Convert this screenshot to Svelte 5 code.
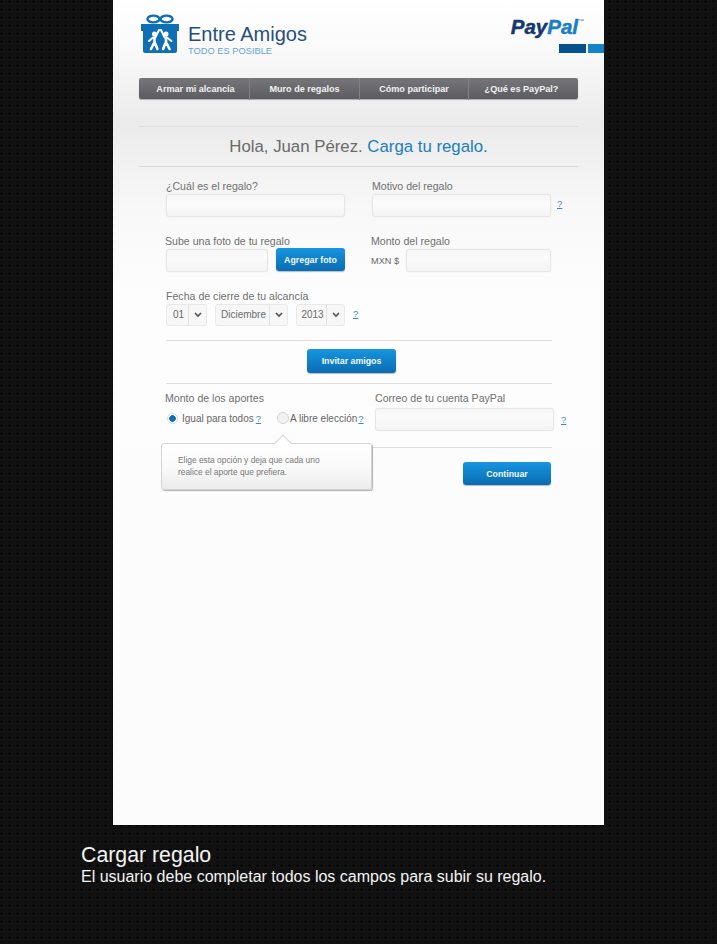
<script>
	const nav = ['Armar mi alcancía', 'Muro de regalos', 'Cómo participar', '¿Qué es PayPal?'];
	const dates = [
		{ value: '01', cls: 'day' },
		{ value: 'Diciembre', cls: 'month' },
		{ value: '2013', cls: 'year' }
	];
</script>

<div class="page">
	<main class="panel">
		<header class="top">
			<div class="brand">
				<svg class="gift" width="38" height="40" viewBox="0 0 38 40">
					<ellipse cx="12.5" cy="5" rx="6" ry="3.4" fill="none" stroke="#0f6fb5" stroke-width="2.4" />
					<ellipse cx="25.5" cy="5" rx="6" ry="3.4" fill="none" stroke="#0f6fb5" stroke-width="2.4" />
					<path d="M0 10H38V17H36V37a2 2 0 0 1-2 2H4a2 2 0 0 1-2-2V17H0z" fill="#0f6fb5" />
					<g fill="#fff">
						<circle cx="13.5" cy="20" r="2.5" />
						<circle cx="25" cy="20" r="2.5" />
					</g>
					<g fill="none" stroke="#fff" stroke-width="2" stroke-linecap="round" stroke-linejoin="round">
						<path d="M8 27l4-3.6h2.4l3.6-7.4" />
						<path d="M13.5 24v5M13 29l-3 6M14 29l2.4 6" stroke-width="2.6" />
						<path d="M20 16l3.6 7.4h2.4l4.4 3.6" />
						<path d="M25 24v5M24.5 29l-2.4 6M25.5 29l3 6" stroke-width="2.6" />
					</g>
				</svg>
				<div class="brand-text">
					<div class="brand-name">Entre Amigos</div>
					<div class="brand-tag">TODO ES POSIBLE</div>
				</div>
			</div>
			<div class="paypal">
				<div class="paypal-word"><b class="pay">Pay</b><b class="pal">Pal</b><span class="tm">™</span></div>
				<div class="stripes"><span class="dark"></span><span class="light"></span></div>
			</div>
		</header>

		<nav class="menu">
			{#each nav as item}
				<a href="#top">{item}</a>
			{/each}
		</nav>

		<h1 class="greeting">Hola, Juan Pérez. <span>Carga tu regalo.</span></h1>

		<form class="form">
			<div class="row one">
				<div class="col">
					<label for="what">¿Cuál es el regalo?</label>
					<input id="what" class="field" />
				</div>
				<div class="col second">
					<label for="why">Motivo del regalo</label>
					<div class="line">
						<input id="why" class="field" />
						<a class="help" href="#top">?</a>
					</div>
				</div>
			</div>

			<div class="row two">
				<div class="col">
					<label class="out" for="photo">Sube una foto de tu regalo</label>
					<div class="line photo">
						<input id="photo" class="field short" />
						<button type="button" class="btn add">Agregar foto</button>
					</div>
				</div>
				<div class="col second out">
					<label for="amount">Monto del regalo</label>
					<div class="line">
						<span class="currency">MXN $</span>
						<input id="amount" class="field amount" />
					</div>
				</div>
			</div>

			<div class="row three">
				<div class="col wide">
					<span class="label">Fecha de cierre de tu alcancía</span>
					<div class="dates">
						{#each dates as d}
							<div class="select {d.cls}">
								<span class="val">{d.value}</span>
								<span class="arrow">
									<svg width="8" height="6" viewBox="0 0 8 6"><path d="M1 1l3 3 3-3" fill="none" stroke="#555" stroke-width="1.7" /></svg>
								</span>
							</div>
						{/each}
						<a class="help" href="#top">?</a>
					</div>
				</div>
			</div>

			<div class="invite">
				<button type="button" class="btn invite-btn">Invitar amigos</button>
			</div>

			<div class="row four">
				<div class="col">
					<span class="label out">Monto de los aportes</span>
					<div class="radios">
						<span class="radio on"></span>
						<span class="opt">Igual para todos</span>
						<a class="help tight" href="#top">?</a>
						<span class="radio off"></span>
						<span class="opt">A libre elección</span>
						<a class="help tight" href="#top">?</a>
					</div>
					<div class="tip">
						<p>Elige esta opción y deja que cada uno<br />realice el aporte que prefiera.</p>
					</div>
				</div>
				<div class="col mail">
					<label for="mail">Correo de tu cuenta PayPal</label>
					<div class="line">
						<input id="mail" class="field mail-field" />
						<a class="help" href="#top">?</a>
					</div>
				</div>
			</div>

			<div class="submit">
				<button type="button" class="btn continue">Continuar</button>
			</div>
		</form>
	</main>

	<footer class="caption">
		<h2>Cargar regalo</h2>
		<p>El usuario debe completar todos los campos para subir su regalo.</p>
	</footer>
</div>

<style>
	:global(body) {
		margin: 0;
		background: #0f0f10;
	}
	.page {
		width: 717px;
		height: 944px;
		overflow: hidden;
		font-family: 'Liberation Sans', Arial, sans-serif;
		background-color: #111112;
		background-image: radial-gradient(circle at 1.5px 1.5px, #050505 1px, transparent 1.3px);
		background-size: 8px 8px;
	}
	.panel {
		box-sizing: border-box;
		width: 491px;
		height: 825px;
		margin-left: 113px;
		padding: 0 26px;
		background: linear-gradient(#fff 0, #fbfbfb 40px, #ebebeb 125px, #f8f8f8 210px, #fdfdfd 290px, #fcfcfc 100%);
	}
	.top {
		display: flex;
		justify-content: space-between;
		height: 78px;
		margin-right: -26px;
	}
	.brand {
		display: flex;
		gap: 9px;
		padding: 14px 0 0 2px;
		align-items: flex-start;
	}
	.gift {
		display: block;
	}
	.brand-text {
		padding-top: 9px;
	}
	.brand-name {
		font-size: 20px;
		line-height: 22px;
		color: #274f7d;
	}
	.brand-tag {
		margin-top: 1px;
		font-size: 9.3px;
		line-height: 11px;
		color: #64a3d4;
	}
	.paypal {
		display: flex;
		flex-direction: column;
		align-items: flex-end;
		padding-top: 15px;
	}
	.paypal-word {
		font-size: 20.5px;
		line-height: 24px;
		font-style: italic;
		margin-right: 20px;
		display: flex;
		-webkit-text-stroke: 0.5px;
	}
	.pay {
		color: #14386f;
	}
	.pal {
		color: #1a7fc1;
	}
	.tm {
		font-size: 6px;
		line-height: 12px;
		color: #777;
		-webkit-text-stroke: 0;
	}
	.stripes {
		display: flex;
		gap: 2px;
		margin-top: 5px;
	}
	.stripes span {
		display: block;
		height: 9px;
	}
	.dark {
		width: 27px;
		background: #07508f;
	}
	.light {
		width: 16px;
		background: #1284cb;
	}

	.menu {
		display: grid;
		grid-template-columns: 110px 110px 109px 109px;
		height: 21px;
		border-radius: 2px;
		background: linear-gradient(#77777b, #5c5c60);
		box-shadow: 0 1px 1px #aaa;
	}
	.menu a {
		font-size: 9.1px;
		font-weight: bold;
		line-height: 22px;
		text-align: center;
		text-decoration: none;
		color: #f2f2f2;
		border-left: 1px solid #828286;
	}
	.menu a:first-child {
		padding-left: 3px;
		border-left: 0;
	}
	.menu a:last-child {
		padding-right: 3px;
	}

	.greeting {
		margin: 27px 0 0;
		height: 39px;
		border-top: 1px solid #dedede;
		border-bottom: 1px solid #dadada;
		font-size: 16.8px;
		font-weight: normal;
		line-height: 39px;
		text-align: center;
		color: #6a6a6a;
	}
	.greeting span {
		color: #1a7dbd;
	}

	.form {
		position: relative;
		padding: 0 26px 0 27px;
		font-size: 11px;
		color: #6d6d6d;
	}
	.row {
		display: flex;
	}
	.col {
		width: 206px;
		flex: none;
	}
	.second {
		width: auto;
	}
	label,
	.label {
		display: block;
		height: 14px;
		font-size: 10.6px;
		line-height: 14px;
		color: #6f6f6f;
	}
	.one {
		padding-top: 12px;
	}
	.one label,
	.two label,
	.three .label {
		margin-bottom: 1px;
	}
	.two {
		padding-top: 17px;
	}
	.two .col.second {
		margin-left: -1px;
	}
	.out {
		margin-left: -1px;
	}
	.three {
		padding-top: 17px;
	}
	.line {
		display: flex;
		align-items: center;
	}
	.field {
		display: block;
		box-sizing: border-box;
		width: 179px;
		height: 23px;
		padding: 0;
		border: 1px solid #e6e6e6;
		border-radius: 3px;
		background: linear-gradient(#f6f6f6, #fbfbfb 40%, #f4f4f4);
		box-shadow: 0 0 1px #ddd;
	}
	.short {
		width: 102px;
	}
	.amount {
		width: 145px;
	}
	.photo {
		gap: 8px;
	}
	.currency {
		width: 35px;
		font-size: 9.2px;
		color: #666;
	}
	.help {
		margin: 0 0 4px 6px;
		font-size: 9.5px;
		color: #3f86bf;
		text-decoration: underline;
	}
	.btn {
		box-sizing: border-box;
		height: 23px;
		padding: 0;
		border: 0;
		border-radius: 3px;
		font-family: inherit;
		font-size: 8.8px;
		font-weight: bold;
		color: #f4f8fb;
		background: linear-gradient(#1795e0, #0a6cb2);
		box-shadow: 0 1px 1px #bbb;
	}
	.add {
		width: 69px;
		margin: -1px 0 1px;
	}
	.dates {
		display: flex;
		gap: 8px;
		align-items: center;
	}
	.dates .help {
		margin-left: 0;
	}
	.select {
		box-sizing: border-box;
		display: flex;
		height: 22px;
		border: 1px solid #e8e8e8;
		border-radius: 3px;
		background: #f7f7f7;
		font-size: 10px;
		line-height: 20px;
		color: #6b6b6b;
	}
	.val {
		flex: 1;
		padding-left: 2px;
		text-align: center;
	}
	.arrow {
		display: flex;
		width: 17px;
		align-items: center;
		justify-content: center;
		border-left: 1px solid #e2e2e2;
	}
	.day {
		width: 41px;
	}
	.month {
		width: 73px;
	}
	.year {
		width: 49px;
	}
	.invite {
		margin-top: 14px;
		padding-top: 8px;
		border-top: 1px solid #dfdfdf;
		text-align: center;
		height: 34px;
		border-bottom: 1px solid #dfdfdf;
	}
	.invite-btn {
		width: 89px;
		height: 24px;
		margin-right: 15px;
	}
	.four {
		position: relative;
		padding-top: 7px;
		height: 56px;
		border-bottom: 1px solid #dfdfdf;
	}
	.four .col:first-child {
		width: 209px;
	}
	.radios {
		display: flex;
		align-items: center;
		height: 14px;
		margin-top: 6px;
		font-size: 10px;
		color: #666;
		white-space: nowrap;
	}
	.radio {
		flex: none;
		box-sizing: border-box;
		width: 11px;
		height: 11px;
		margin-left: 1px;
		border: 1px solid #d5d5d5;
		border-radius: 50%;
		background: #f1f1f1;
	}
	.radio.on {
		background: radial-gradient(circle, #0f70b5 3px, #fff 3.6px);
		border-color: #dadada;
	}
	.radio.off {
		width: 12px;
		height: 12px;
		margin-left: 0;
	}
	.opt {
		margin-left: 4px;
	}
	.off + .opt {
		margin-left: 1px;
	}
	.help.tight {
		margin: 0 16px 0 2px;
	}
	.radios .help.tight:last-child {
		margin: 0 0 0 1px;
	}
	.mail .line {
		margin-top: -1px;
	}
	.mail label {
		margin-bottom: 4px;
	}
	.mail-field {
		width: 179px;
	}
	.mail .help {
		margin: 0 0 0 7px;
	}
	.tip {
		position: absolute;
		left: -5px;
		top: 59px;
		z-index: 2;
		box-sizing: border-box;
		width: 211px;
		height: 47px;
		padding: 10px 16px;
		border: 1px solid #d4d4d4;
		border-radius: 3px;
		background: linear-gradient(#fff, #fafafa 50%, #ececec);
		box-shadow: 1px 1px 1px #b0b0b0;
	}
	.tip::before {
		content: '';
		position: absolute;
		left: 115px;
		top: -7px;
		width: 11px;
		height: 11px;
		background: #fff;
		border-left: 1px solid #d4d4d4;
		border-top: 1px solid #d4d4d4;
		transform: rotate(45deg);
	}
	.tip p {
		margin: 0;
		font-size: 8.4px;
		line-height: 12px;
		color: #777;
	}
	.submit {
		display: flex;
		justify-content: flex-end;
		padding: 14px 1px 0 0;
	}
	.continue {
		width: 88px;
	}

	.caption {
		padding: 19px 0 0 81px;
		color: #f4f4f4;
	}
	.caption h2 {
		margin: 0;
		font-size: 21.3px;
		font-weight: normal;
		line-height: 22px;
	}
	.caption p {
		margin: 1px 0 0;
		font-size: 16px;
		line-height: 19px;
	}
</style>
